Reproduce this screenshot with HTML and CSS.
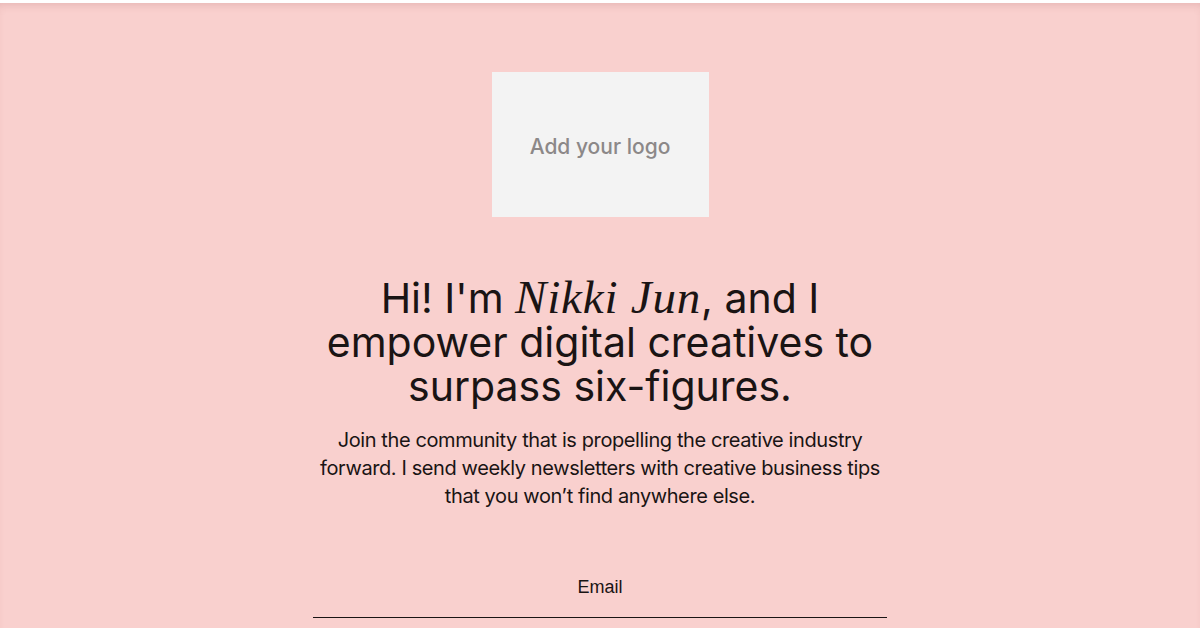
FILE: index.html
```html
<!DOCTYPE html>
<html lang="en">

<head>
    <meta charset="UTF-8">
    <title>Nikki Jun | Newsletter</title>
    <meta name="viewport" content="width=device-width, initial-scale=1.0">
    <link rel="stylesheet" href="styles.css">
</head>

<body>
    <main class="signup-page">
        <div class="logo-box">Add your logo</div>
        <h1 class="headline">Hi! I'm <em>Nikki Jun</em>, and I empower digital creatives to surpass six-figures.</h1>
        <p class="intro">Join the community that is propelling the creative industry forward. I send weekly newsletters with creative business tips that you won’t find anywhere else.</p>
        <form class="signup-form">
            <label for="email">Email</label>
            <input type="email" id="email" name="email">
        </form>
    </main>
</body>

</html>
```

FILE: styles.css
```css
body {
    margin: 0;
    background: #f9d0ce;
    color: #1a1414;
    font-family: Inter, 'Liberation Sans', Arial, sans-serif;
    border-top: 3px solid #fff;
    box-shadow: inset 0 6px 8px -4px rgba(150, 60, 60, 0.18);
    min-height: 625px;
}

.signup-page {
    display: flex;
    flex-direction: column;
    align-items: center;
    padding-top: 69px;
}

.logo-box {
    width: 217px;
    height: 145px;
    background: #f3f3f3;
    color: #8c8888;
    font-size: 21px;
    font-weight: 500;
    display: flex;
    align-items: center;
    justify-content: center;
    padding-top: 3px;
    box-sizing: border-box;
}

.headline {
    margin: 59px 0 0 0;
    max-width: 600px;
    text-align: center;
    font-size: 41px;
    line-height: 44px;
    font-weight: 400;
    letter-spacing: 0;
}

.headline em {
    font-family: 'Liberation Serif', 'Times New Roman', serif;
    font-size: 47px;
    line-height: 40px;
    letter-spacing: 0.8px;
}

.intro {
    margin: 18px 0 0 0;
    max-width: 570px;
    text-align: center;
    font-size: 20px;
    line-height: 28px;
    letter-spacing: -0.4px;
}

.signup-form {
    margin-top: 66px;
    width: 574px;
    display: flex;
    flex-direction: column;
    align-items: center;
}

.signup-form label {
    font-family: 'Liberation Sans', Arial, sans-serif;
    font-size: 18px;
    line-height: 22px;
}

.signup-form input {
    width: 100%;
    height: 12px;
    margin-top: 7px;
    padding: 0;
    border: none;
    border-bottom: 1px solid #1a1414;
    background: transparent;
    outline: none;
}
```
